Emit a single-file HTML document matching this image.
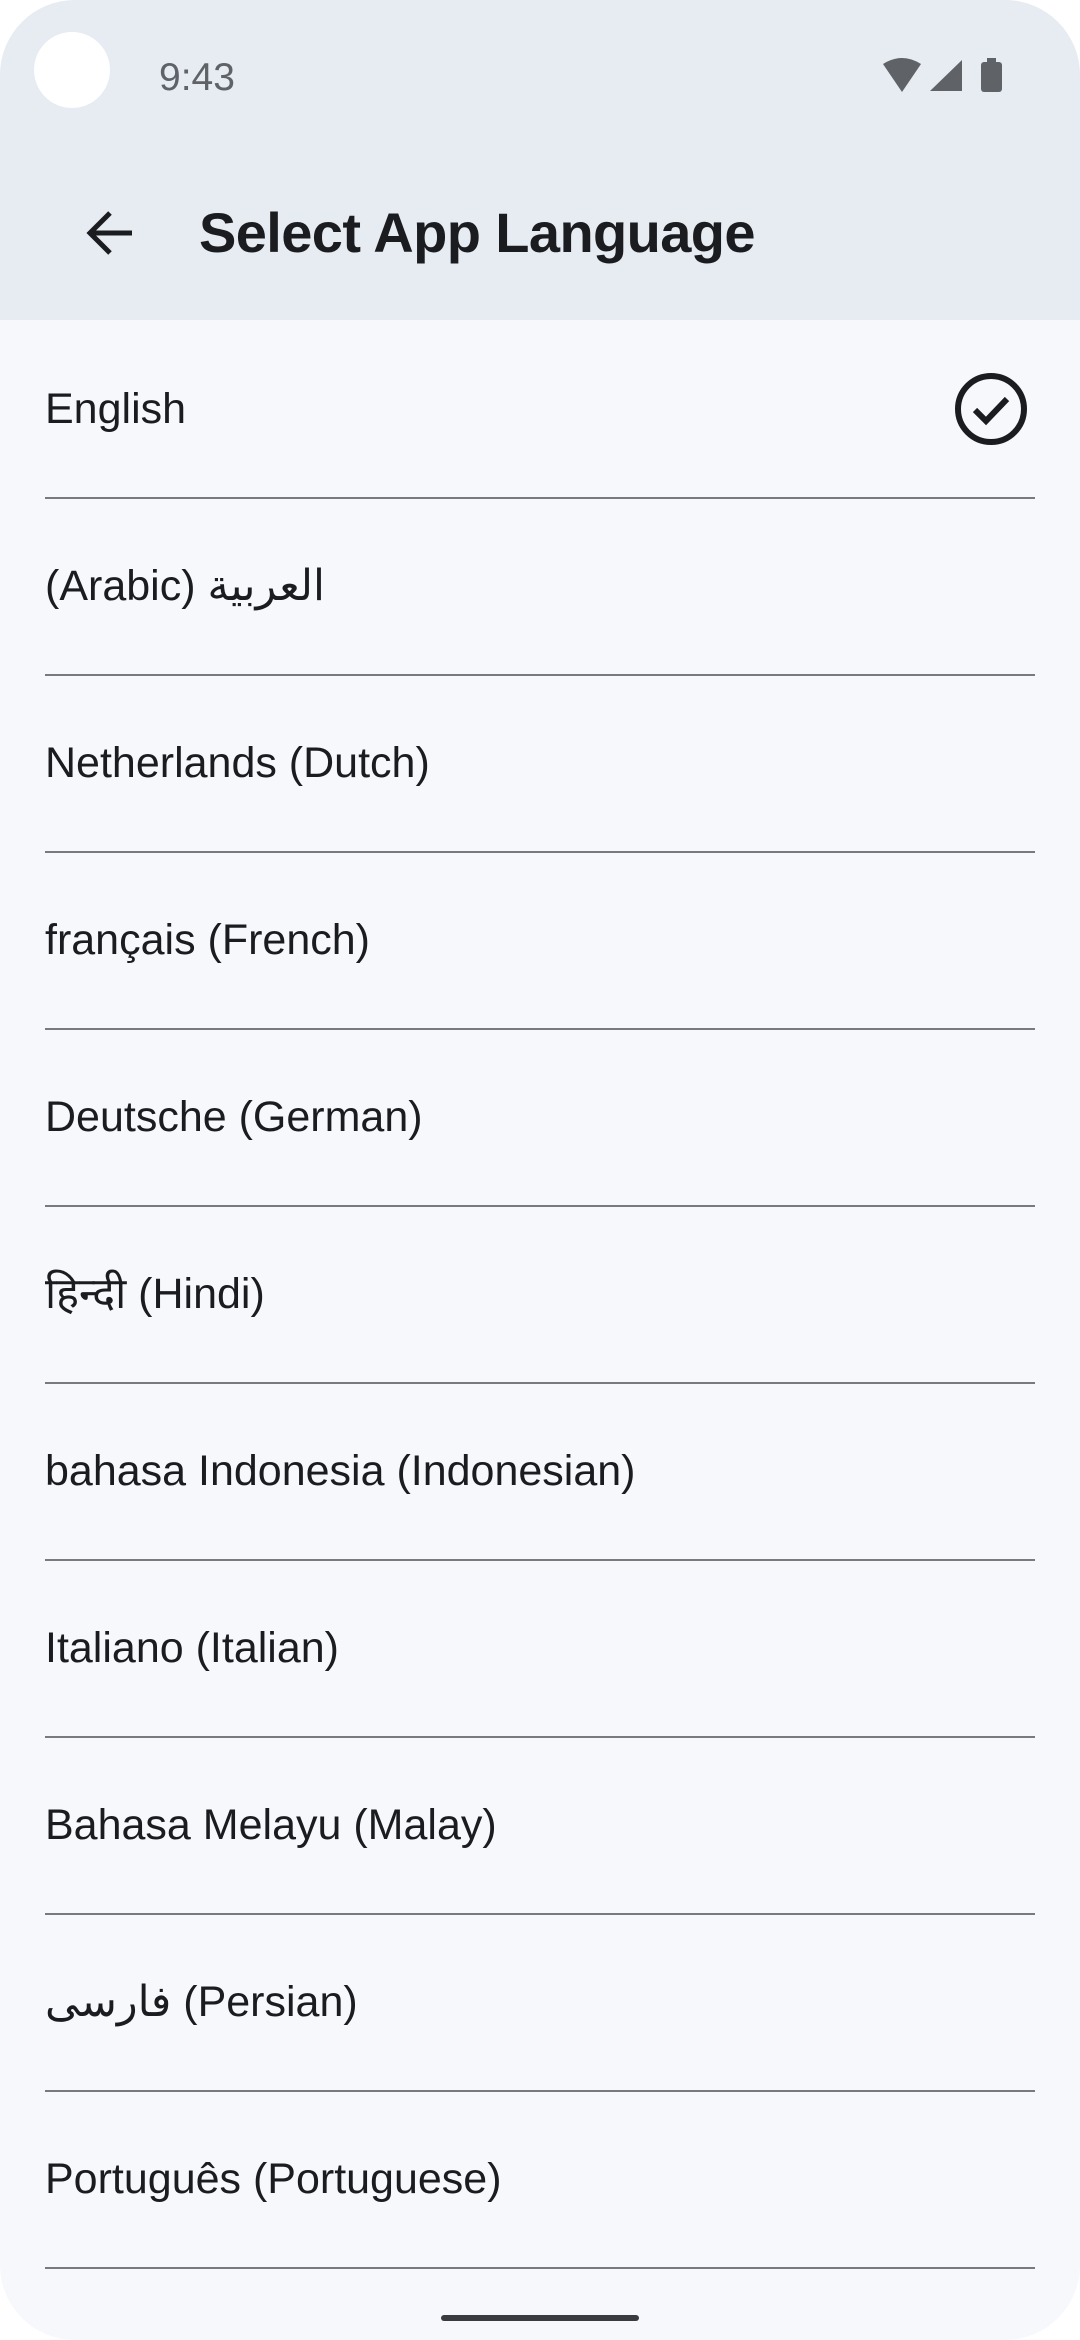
<!DOCTYPE html>
<html><head><meta charset="utf-8"><style>
html,body{margin:0;padding:0;background:#fff}
body{width:1080px;height:2340px;position:relative;overflow:hidden;font-family:"Liberation Sans","Noto Sans CJK SC","DejaVu Sans",sans-serif}
.screen{position:absolute;left:0;top:0;width:1080px;height:2340px;border-radius:75px;overflow:hidden;background:#f7f8fc}
.hdr{position:absolute;left:0;top:0;width:1080px;height:320px;background:#e7ebf2}
.cam{position:absolute;left:34px;top:32px;width:76px;height:76px;border-radius:50%;background:#fff}
.time{position:absolute;left:159px;top:56px;font-size:39px;color:#5f6368}
.title{position:absolute;left:199px;top:200px;font-size:56px;color:#1b1c20;font-weight:bold;letter-spacing:-0.6px}
.row{position:absolute;left:45px;width:990px;height:176px;border-bottom:2px solid #7a7a7e}
.row span{position:absolute;left:0;top:0;line-height:176px;font-size:43px;color:#1b1c20}
.ar{font-size:40px}
.handle{position:absolute;left:441px;top:2315px;width:198px;height:6px;border-radius:3px;background:#3a3b40}
</style></head><body><div class="screen">
<div class="hdr"></div>
<div class="cam"></div>
<div class="time">9:43</div>
<svg style="position:absolute;left:880px;top:58px" width="126" height="36" viewBox="0 0 126 36">
<path d="M3 6 Q22 -6 41 6 L22 34 Z" fill="#5f6368"/>
<path d="M82 2 L82 33 L50 33 Z" fill="#5f6368"/>
<rect x="101" y="4" width="21" height="30" rx="3" fill="#5f6368"/><rect x="107" y="0" width="9" height="5" fill="#5f6368"/>
</svg>
<svg style="position:absolute;left:84px;top:207px" width="52" height="52" viewBox="0 0 52 52">
<path d="M48 26 H6 M26 6 L6 26 L26 46" fill="none" stroke="#1b1c20" stroke-width="5"/>
</svg>
<div class="title">Select App Language</div>
<div class="row" style="top:321px"><span>English</span>
<svg style="position:absolute;left:908px;top:50px" width="76" height="76" viewBox="0 0 76 76"><circle cx="38" cy="38" r="33" fill="none" stroke="#1b1c20" stroke-width="6"/><path d="M22 39 L33 50 L54 28" fill="none" stroke="#1b1c20" stroke-width="6"/></svg></div>
<div class="row" style="top:498px"><span>(Arabic) <span class="ar" style="position:static">العربية</span></span></div>
<div class="row" style="top:675px"><span>Netherlands (Dutch)</span></div>
<div class="row" style="top:852px"><span>français (French)</span></div>
<div class="row" style="top:1029px"><span>Deutsche (German)</span></div>
<div class="row" style="top:1206px"><span>हिन्दी (Hindi)</span></div>
<div class="row" style="top:1383px"><span>bahasa Indonesia (Indonesian)</span></div>
<div class="row" style="top:1560px"><span>Italiano (Italian)</span></div>
<div class="row" style="top:1737px"><span>Bahasa Melayu (Malay)</span></div>
<div class="row" style="top:1914px"><span><span class="ar" style="position:static">فارسی</span> (Persian)</span></div>
<div class="row" style="top:2091px"><span>Português (Portuguese)</span></div>
<div class="handle"></div>
</div></body></html>
